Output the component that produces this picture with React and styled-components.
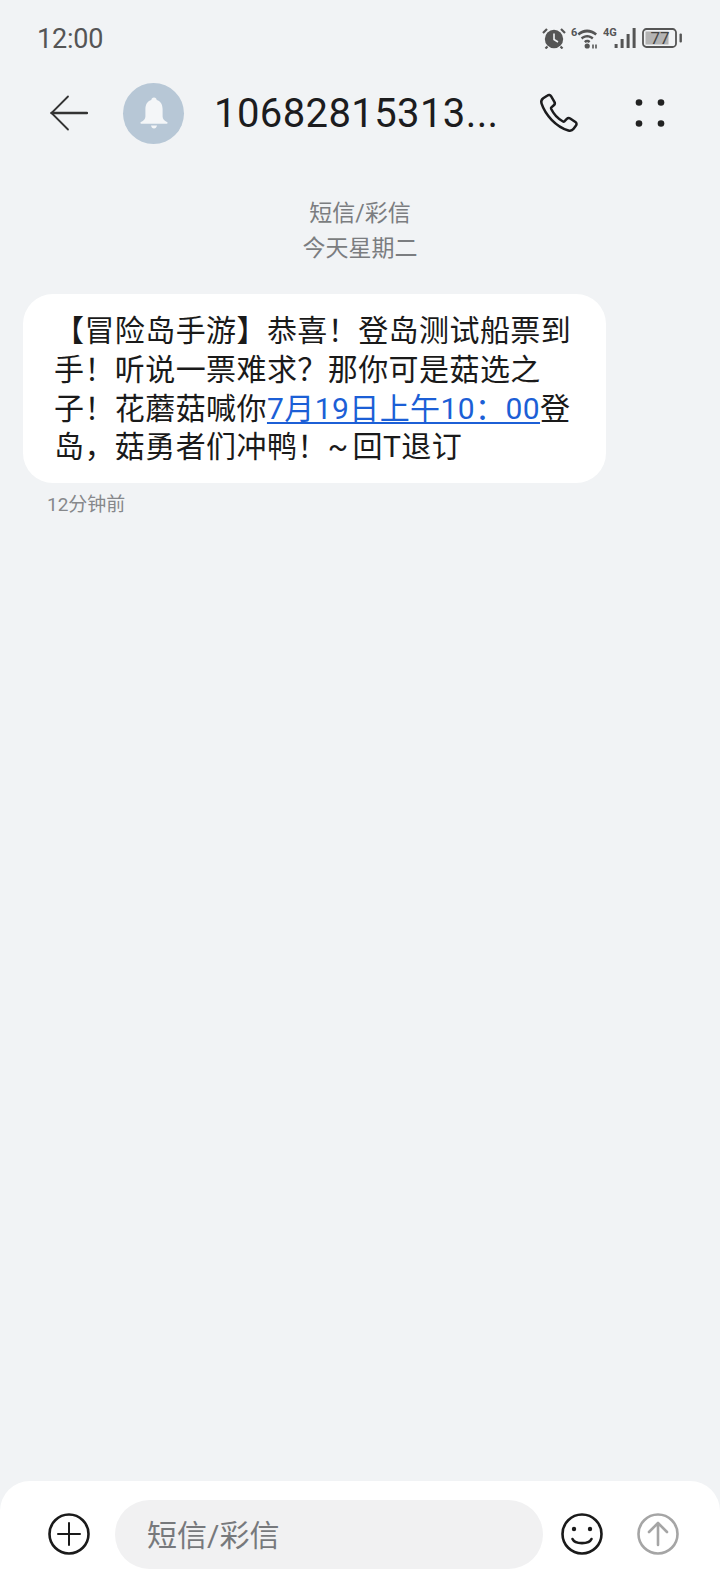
import React from "react";
import styled, { createGlobalStyle } from "styled-components";

const GlobalStyle = createGlobalStyle`
  html, body {
    margin: 0;
    padding: 0;
    background: #f1f3f5;
  }
  * {
    box-sizing: border-box;
  }
`;

const CJK = `Roboto, "Noto Sans CJK SC", sans-serif`;

const Wrapper = styled.div`
  width: 720px;
  height: 1588px;
  display: flex;
  flex-direction: column;
  background: #f1f3f5;
  font-family: ${CJK};
  overflow: hidden;
`;

const StatusBar = styled.div`
  height: 76px;
  flex-shrink: 0;
  display: flex;
  align-items: center;
  justify-content: space-between;
  padding: 0 36px 0 37px;
  color: #555;
`;

const Clock = styled.span`
  font-size: 27px;
  letter-spacing: -0.2px;
  padding-top: 2px;
`;

const StatusIcons = styled.div`
  display: flex;
  align-items: center;
  gap: 5px;
  svg {
    display: block;
  }
`;

const Header = styled.div`
  height: 74px;
  flex-shrink: 0;
  display: flex;
  align-items: center;
  padding-left: 50px;
`;

const Avatar = styled.div`
  width: 61px;
  height: 61px;
  margin-left: 35px;
  border-radius: 50%;
  background: #b7c7d6;
  display: flex;
  align-items: center;
  justify-content: center;
`;

const Title = styled.h1`
  width: 325px;
  margin: 0 0 0 30px;
  font-size: 40px;
  font-weight: 400;
  letter-spacing: 0.4px;
  color: #1c1c1e;
  white-space: nowrap;
`;

const HeaderAction = styled.div`
  display: flex;
  align-items: center;
  justify-content: center;
  width: ${(p) => p.$width}px;
  margin-left: ${(p) => p.$gap}px;
`;

const Messages = styled.div`
  flex-grow: 1;
  padding-top: 46px;
  display: flex;
  flex-direction: column;
`;

const DateLabel = styled.div`
  text-align: center;
  font-size: 23px;
  line-height: 35px;
  color: #7b7d80;
`;

const Bubble = styled.div`
  width: 583px;
  margin: 28px 0 0 23px;
  padding: 18px 0 15.8px 31px;
  background: #fff;
  border-radius: 30px;
  font-size: 30px;
  line-height: 38.8px;
  letter-spacing: 0.42px;
  color: #1a1a1a;
`;

const BubbleLine = styled.div`
  white-space: nowrap;
  word-spacing: ${(p) => p.$wordSpacing || 0}px;
`;

const DateLink = styled.span`
  color: #1c5fd6;
  text-decoration: underline;
  text-decoration-thickness: 2px;
  text-underline-offset: 3px;
`;

const Ago = styled.div`
  margin: 8px 0 0 47px;
  font-size: 19px;
  line-height: 27px;
  color: #86888b;
`;

const Composer = styled.div`
  height: 107px;
  flex-shrink: 0;
  display: flex;
  align-items: flex-start;
  padding: 19px 0 0 48px;
  background: #fff;
  border-radius: 30px 30px 0 0;
`;

const ComposerIcon = styled.div`
  width: 42px;
  height: 67px;
  display: flex;
  align-items: center;
  margin-left: ${(p) => p.$gap || 0}px;
`;

const Input = styled.div`
  width: 428px;
  height: 69px;
  margin-left: 25px;
  padding: 0 0 4px 32px;
  display: flex;
  align-items: center;
  border-radius: 35px;
  background: #f1f1f2;
  font-size: 30px;
  color: #77797c;
`;

const AlarmIcon = () => (
  <svg width="24" height="22" viewBox="0 0 24 22">
    <circle cx="12" cy="12" r="9.2" fill="#555" />
    <path d="M12 6.5V12.5L16 15" fill="none" stroke="#f1f3f5" strokeWidth="1.6" />
    <path d="M1 6L5 2M23 6L19 2M5.5 19.5L3.5 21.5M18.5 19.5L20.5 21.5" stroke="#555" strokeWidth="2.2" />
  </svg>
);

const WifiIcon = () => (
  <svg width="27" height="22" viewBox="0 0 27 22">
    <text x="0" y="9" fontSize="11" fontWeight="700" fill="#555" fontFamily="Roboto, sans-serif">6</text>
    <path d="M6.5 6.5C12 1.2 20 1.2 26 6.5L24.4 8.6C19.5 4.3 12.8 4.3 8.1 8.6Z" fill="#555" />
    <path d="M9.8 10.5C13.4 7.1 19 7.1 22.6 10.5L21 12.5C18.2 9.9 14.2 9.9 11.4 12.5Z" fill="#555" />
    <path d="M13 14.2C14.8 12.4 17.6 12.4 19.4 14.2L17.8 16C16.8 15.1 15.6 15.1 14.6 16Z" fill="#555" />
    <circle cx="16.2" cy="19" r="2.6" fill="#555" />
    <path d="M22 17.5V21.5M25 21.5V17.5" stroke="#555" strokeWidth="1.6" />
  </svg>
);

const SignalIcon = () => (
  <svg width="34" height="22" viewBox="0 0 34 22">
    <text x="0" y="9" fontSize="11" fontWeight="700" fill="#555" fontFamily="Roboto, sans-serif">4G</text>
    <rect x="11.6" y="17" width="3" height="4" fill="#555" />
    <rect x="17.6" y="12" width="3" height="9" fill="#555" />
    <rect x="23.6" y="7" width="3" height="14" fill="#555" />
    <rect x="29.6" y="1" width="3" height="20" fill="#555" />
  </svg>
);

const BatteryIcon = () => (
  <svg width="42" height="22" viewBox="0 0 42 22">
    <rect x="1" y="2" width="33" height="18" rx="3.5" fill="none" stroke="#555" strokeWidth="1.8" />
    <rect x="3.5" y="4.5" width="23" height="13" fill="#b4b4b4" />
    <rect x="37.5" y="6.5" width="2.4" height="9" rx="1" fill="#555" />
    <text x="18" y="17" fontSize="17" textAnchor="middle" fill="#444" fontFamily="Roboto, sans-serif">77</text>
  </svg>
);

const BackIcon = () => (
  <svg width="38" height="36" viewBox="0 0 38 36" fill="none" stroke="#333" strokeWidth="2.4" strokeLinecap="round">
    <path d="M18 1.5L1.5 18L18 34.5" strokeWidth="1.8" />
    <path d="M1.5 18H37" />
  </svg>
);

const BellIcon = () => (
  <svg width="30" height="32" viewBox="0 0 30 32" fill="#f4f6f8">
    <path d="M15 0.5C16.6 0.5 17.6 1.6 17.7 3C21.7 4.1 23.6 7.7 23.6 12V19.5C23.6 22 25.4 23.6 28 25C29 25.6 28.8 26.8 27.6 26.8H2.4C1.2 26.8 1 25.6 2 25C4.6 23.6 6.4 22 6.4 19.5V12C6.4 7.7 8.3 4.1 12.3 3C12.4 1.6 13.4 0.5 15 0.5Z" />
    <path d="M12 28.5H18C17.6 30.4 16.5 31.4 15 31.4C13.5 31.4 12.4 30.4 12 28.5Z" />
  </svg>
);

const PhoneIcon = () => (
  <svg width="40" height="40" viewBox="0 0 40 40" fill="none" stroke="#1c1c1e" strokeWidth="2.5" strokeLinejoin="round">
    <path d="M8.5 2.5C9.8 1.6 11.4 2 12.2 3.3L15.4 8.8C16.1 10 15.8 11.4 14.8 12.3L12.4 14.4C12 14.8 11.9 15.3 12.1 15.8C14.5 20.8 18.9 25.8 24 28.5C24.5 28.8 25 28.7 25.4 28.3L27.8 25.9C28.7 25 30.1 24.8 31.2 25.5L36.4 29C37.6 29.8 37.9 31.4 37 32.6L34.6 35.8C33.4 37.4 31.4 38.1 29.4 37.5C16.8 33.6 6.2 21.8 2.5 10.4C1.9 8.5 2.6 6.5 4.2 5.3Z" />
  </svg>
);

const DotsIcon = () => (
  <svg width="30" height="28" viewBox="0 0 30 28" fill="#222">
    <circle cx="4" cy="3.5" r="3.3" />
    <circle cx="26" cy="3.5" r="3.3" />
    <circle cx="4" cy="24.5" r="3.3" />
    <circle cx="26" cy="24.5" r="3.3" />
  </svg>
);

const PlusIcon = () => (
  <svg width="42" height="42" viewBox="0 0 42 42" fill="none" stroke="#1a1a1a" strokeWidth="2.6" strokeLinecap="round">
    <circle cx="21" cy="21" r="19.5" />
    <path d="M21 10V32M10 21H32" strokeWidth="2" />
  </svg>
);

const SmileIcon = () => (
  <svg width="42" height="42" viewBox="0 0 42 42" fill="none" stroke="#1a1a1a" strokeWidth="2.6" strokeLinecap="round">
    <circle cx="21" cy="21" r="19.5" />
    <circle cx="13" cy="16" r="2.2" fill="#1a1a1a" stroke="none" />
    <circle cx="29" cy="16" r="2.2" fill="#1a1a1a" stroke="none" />
    <path d="M11.5 26C14 31.5 28 31.5 30.5 26" />
  </svg>
);

const SendIcon = () => (
  <svg width="42" height="42" viewBox="0 0 42 42" fill="none" stroke="#a5a5a5" strokeWidth="2.6" strokeLinecap="round" strokeLinejoin="round">
    <circle cx="21" cy="21" r="19.5" />
    <path d="M21 32V10M12 19L21 10L30 19" />
  </svg>
);

const App = () => {
  return (
    <Wrapper>
      <GlobalStyle />
      <StatusBar>
        <Clock>12:00</Clock>
        <StatusIcons>
          <AlarmIcon />
          <WifiIcon />
          <SignalIcon />
          <BatteryIcon />
        </StatusIcons>
      </StatusBar>
      <Header>
        <BackIcon />
        <Avatar>
          <BellIcon />
        </Avatar>
        <Title>10682815313...</Title>
        <HeaderAction $width={40} $gap={0}>
          <PhoneIcon />
        </HeaderAction>
        <HeaderAction $width={30} $gap={56}>
          <DotsIcon />
        </HeaderAction>
      </Header>
      <Messages>
        <DateLabel>短信/彩信</DateLabel>
        <DateLabel>今天星期二</DateLabel>
        <Bubble>
          <BubbleLine>【冒险岛手游】恭喜！登岛测试船票到</BubbleLine>
          <BubbleLine>手！听说一票难求？那你可是菇选之</BubbleLine>
          <BubbleLine>
            子！花蘑菇喊你<DateLink>7月19日上午10：00</DateLink>登
          </BubbleLine>
          <BubbleLine $wordSpacing={-4}>岛，菇勇者们冲鸭！~ 回T退订</BubbleLine>
        </Bubble>
        <Ago>12分钟前</Ago>
      </Messages>
      <Composer>
        <ComposerIcon>
          <PlusIcon />
        </ComposerIcon>
        <Input>短信/彩信</Input>
        <ComposerIcon $gap={18}>
          <SmileIcon />
        </ComposerIcon>
        <ComposerIcon $gap={34}>
          <SendIcon />
        </ComposerIcon>
      </Composer>
    </Wrapper>
  );
};

export default App;
